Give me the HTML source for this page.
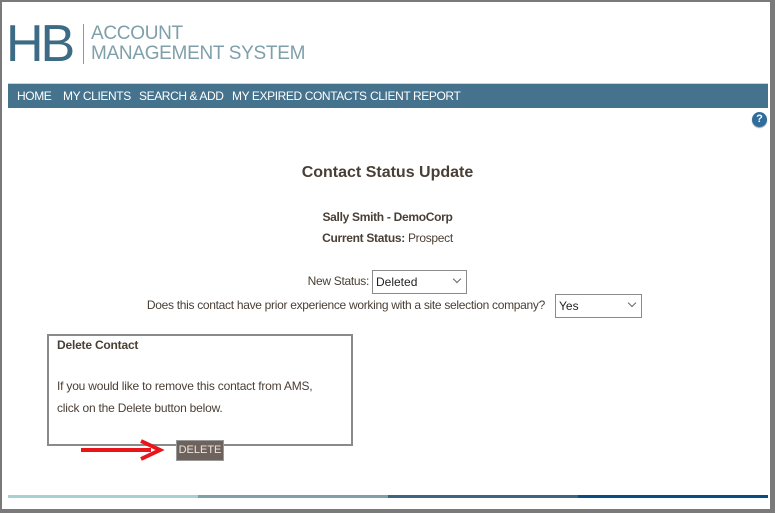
<!DOCTYPE html>
<html><head><meta charset="utf-8"><style>
*{margin:0;padding:0;box-sizing:border-box}
body{width:775px;height:513px;position:relative;background:#fff;font-family:"Liberation Sans",sans-serif;color:#4a3f35;overflow:hidden}
.frame{position:absolute;left:0;top:0;width:775px;height:513px;border:solid #7a7a7a;border-width:2px 5px 4px 2px}
.a{position:absolute;white-space:nowrap}
.nav{position:absolute;left:8px;top:83px;width:760px;height:25px;background:#45728c;border-top:1px solid #c9d3d8}
.nav span{position:absolute;top:5px;color:#fff;font-size:12px;letter-spacing:-0.4px}
.sel{position:absolute;border:1px solid #8a8a8a;height:24px;font-size:12px;color:#222;padding:4px 3px;background:#fff}
.sel i{position:absolute;right:6px;top:5px;width:6px;height:6px;border-right:1px solid #666;border-bottom:1px solid #666;transform:rotate(45deg)}
</style></head><body>
<div class="frame"></div>
<div class="a" style="left:6px;top:18px;font-size:52px;color:#3d6b85;letter-spacing:-3px;line-height:52px;font-weight:300">HB</div>
<div class="a" style="left:83px;top:24px;width:1px;height:40px;background:#7f9ea8"></div>
<div class="a" style="left:91px;top:24px;font-size:19px;color:#7fa0aa;line-height:20px;letter-spacing:-0.3px">ACCOUNT<br>MANAGEMENT SYSTEM</div>
<div class="nav">
<span style="left:9px">HOME</span><span style="left:55px">MY CLIENTS</span><span style="left:131px">SEARCH &amp; ADD</span><span style="left:224px">MY EXPIRED CONTACTS</span><span style="left:362px">CLIENT REPORT</span>
</div>
<div class="a" style="left:752px;top:112px;width:15px;height:15px;border-radius:50%;background:#2f6d9c;color:#fff;font-size:11px;font-weight:bold;text-align:center;line-height:15px;box-shadow:0 1px 1px #999">?</div>
<div class="a" style="left:0;width:775px;text-align:center;top:164px;font-size:16px;font-weight:bold">Contact Status Update</div>
<div class="a" style="left:0;width:775px;text-align:center;top:210px;font-size:12px;font-weight:bold;letter-spacing:-0.3px">Sally Smith - DemoCorp</div>
<div class="a" style="left:0;width:775px;text-align:center;top:231px;font-size:12px;letter-spacing:-0.3px"><b>Current Status:</b> Prospect</div>
<div class="a" style="right:406px;top:274px;font-size:12px;letter-spacing:-0.3px">New Status:</div>
<div class="sel" style="left:372px;top:270px;width:95px">Deleted<i></i></div>
<div class="a" style="right:230px;top:298px;font-size:12px;letter-spacing:-0.3px">Does this contact have prior experience working with a site selection company?</div>
<div class="sel" style="left:555px;top:294px;width:87px">Yes<i></i></div>
<div class="a" style="left:47px;top:334px;width:306px;height:112px;border:2px solid #8a8a8a"></div>
<div class="a" style="left:57px;top:338px;font-size:12px;font-weight:bold;letter-spacing:-0.2px">Delete Contact</div>
<div class="a" style="left:57px;top:375px;font-size:12px;line-height:22px;letter-spacing:-0.2px">If you would like to remove this contact from AMS,<br>click on the Delete button below.</div>
<div class="a" style="left:176px;top:440px;width:48px;height:21px;background:#6e625c;border:1px solid #9a9a9a;color:#ece6e0;font-size:11px;text-align:center;line-height:19px">DELETE</div>
<div class="a" style="left:81px;top:448px;width:70px;height:4px;background:#e8161b"></div>
<svg class="a" style="left:138px;top:438px" width="28" height="24"><path d="M3 3 L22 12 L3 21" fill="none" stroke="#e8161b" stroke-width="4"/></svg>
<div class="a" style="left:8px;top:495px;height:3px;width:190px;background:#a5d2cf"></div>
<div class="a" style="left:198px;top:495px;height:3px;width:190px;background:#7f9fa9"></div>
<div class="a" style="left:388px;top:495px;height:3px;width:190px;background:#3d6580"></div>
<div class="a" style="left:578px;top:495px;height:3px;width:190px;background:#094d82"></div>
</body></html>
